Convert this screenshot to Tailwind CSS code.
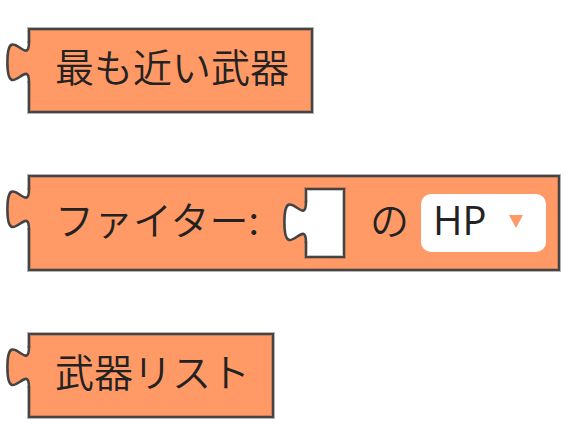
<!DOCTYPE html>
<html lang="ja">
<head>
<meta charset="utf-8">
<meta name="viewport" content="width=device-width, initial-scale=1">
<title>ブロック</title>
<script src="https://cdn.jsdelivr.net/npm/@tailwindcss/browser@4"></script>
</head>
<body class="bg-white">
<!-- Puzzle tab shared by the value blocks and the empty socket -->
<svg class="hidden" aria-hidden="true">
  <symbol id="tab-fill" viewBox="0 0 28 42">
    <path d="M23 1c0 27-21.6-21.6-21.6 20.25s21.6-6.75 21.6 20.25h3V1z"/>
  </symbol>
  <symbol id="tab-line" viewBox="0 0 28 42">
    <path d="M23 0v1c0 27-21.6-21.6-21.6 20.25s21.6-6.75 21.6 20.25v.5" fill="none" stroke-width="2.6"/>
  </symbol>
</svg>
<main class="flex flex-col items-start gap-[62px] pt-7 pl-7 pb-6 text-[39px] leading-[57px] font-[350] text-[#222] whitespace-nowrap font-['Noto_Sans_CJK_JP','Noto_Sans',sans-serif]">

  <section class="relative flex items-center min-h-[85px] pl-[25px] pr-[22px] border-2 border-[#444] bg-[#ff9966] shadow-[0_0_0_1px_#44444466,inset_0_0_0_1px_#4444444d]">
    <svg class="absolute -left-6 top-[11px] w-7 h-[42px] overflow-visible" viewBox="0 0 28 42" aria-hidden="true">
      <path d="M20 2h3v38h-3z" fill="#fff"/>
      <use href="#tab-fill" width="28" height="42" fill="#ff9966"/>
      <use href="#tab-line" width="28" height="42" stroke="#444"/>
    </svg>
    <span class="pb-2.5">最も近い武器</span>
  </section>

  <section class="relative flex items-center min-h-24 pl-[25px] pr-3 py-[11px] border-2 border-[#444] bg-[#ff9966] shadow-[0_0_0_1px_#44444466,inset_0_0_0_1px_#4444444d]">
    <svg class="absolute -left-6 top-[11px] w-7 h-[42px] overflow-visible" viewBox="0 0 28 42" aria-hidden="true">
      <path d="M20 2h3v38h-3z" fill="#fff"/>
      <use href="#tab-fill" width="28" height="42" fill="#ff9966"/>
      <use href="#tab-line" width="28" height="42" stroke="#444"/>
    </svg>
    <label for="stat" class="pb-2.5">ファイター:</label>
    <span class="relative ml-[46px] mr-[25px] w-10 h-[70px] border-2 border-[#444] bg-white shadow-[0_0_0_1px_#4444444d,inset_0_0_0_1px_#4444444d]">
      <svg class="absolute -left-6 top-[11px] w-7 h-[42px] overflow-visible" viewBox="0 0 28 42" aria-hidden="true">
        <path d="M20 2h3v38h-3z" fill="#ff9966"/>
        <use href="#tab-fill" width="28" height="42" fill="#fff"/>
        <use href="#tab-line" width="28" height="42" stroke="#444"/>
      </svg>
    </span>
    <span class="pb-2.5">の</span>
    <span class="relative ml-3">
      <select id="stat" class="block appearance-none w-[125px] h-[58px] pl-3 pb-1.5 rounded-[10px] bg-white text-[40px] leading-[52px] font-normal font-['Open_Sans','Noto_Sans',sans-serif]">
        <option>HP</option>
      </select>
      <svg class="absolute right-[23px] top-[21px] w-3.5 h-[13px] pointer-events-none" viewBox="0 0 14 13" aria-hidden="true"><path d="M0 0h14L7 13z" fill="#ff9966"/></svg>
    </span>
  </section>

  <section class="relative flex items-center min-h-[85px] pl-[25px] pr-[22px] border-2 border-[#444] bg-[#ff9966] shadow-[0_0_0_1px_#44444466,inset_0_0_0_1px_#4444444d]">
    <svg class="absolute -left-6 top-[11px] w-7 h-[42px] overflow-visible" viewBox="0 0 28 42" aria-hidden="true">
      <path d="M20 2h3v38h-3z" fill="#fff"/>
      <use href="#tab-fill" width="28" height="42" fill="#ff9966"/>
      <use href="#tab-line" width="28" height="42" stroke="#444"/>
    </svg>
    <span class="pb-2.5">武器リスト</span>
  </section>
</main>
</body>
</html>
